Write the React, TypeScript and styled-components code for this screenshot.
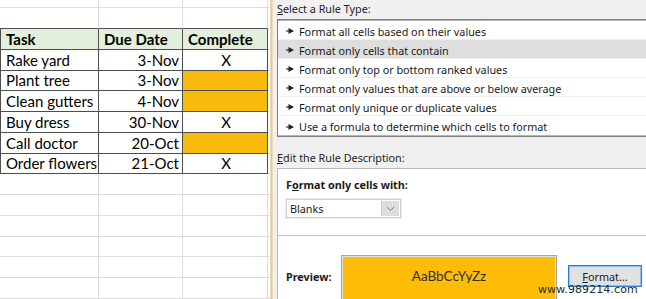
import React from 'react';
import styled, { createGlobalStyle, css } from 'styled-components';

const GlobalStyle = createGlobalStyle`
  html, body {
    margin: 0;
    padding: 0;
    width: 646px;
    height: 299px;
    overflow: hidden;
    background: #ffffff;
  }
`;

const Screen = styled.div`
  position: relative;
  display: flex;
  width: 646px;
  height: 299px;
  overflow: hidden;
`;

/* ---------- spreadsheet ---------- */

const Sheet = styled.div`
  width: 270px;
  flex: none;
  display: grid;
  grid-template-columns: 99px 84px 85px 2px;
  grid-template-rows: 8px 21px;
  grid-auto-rows: 20.75px;
  font-family: Lato, 'Open Sans', sans-serif;
  font-size: 15px;
  color: #000;
  background: #fff;
`;

type CellProps = {
  $dark?: boolean;
  $darkTop?: boolean;
  $darkLeft?: boolean;
  $head?: boolean;
  $fill?: boolean;
  $align?: 'left' | 'right' | 'center';
};

const Cell = styled.div<CellProps>`
  box-sizing: border-box;
  display: flex;
  align-items: center;
  padding: 0 3px 0 5px;
  white-space: nowrap;
  overflow: hidden;
  border-right: 1px solid #dcdcdc;
  border-bottom: 1px solid #dcdcdc;
  justify-content: ${(p) =>
    p.$align === 'right' ? 'flex-end' : p.$align === 'center' ? 'center' : 'flex-start'};
  ${(p) =>
    p.$dark &&
    css`
      border-right-color: #4d4d4d;
      border-bottom-color: #4d4d4d;
    `}
  ${(p) => p.$darkTop && css`border-bottom-color: #4d4d4d;`}
  ${(p) => p.$darkLeft && css`border-left: 1px solid #4d4d4d;`}
  ${(p) =>
    p.$head &&
    css`
      background: #e2efda;
      font-weight: 700;
    `}
  ${(p) => p.$fill && css`background: #f8bb0c;`}
`;

const Shadow = styled.div`
  width: 3px;
  flex: none;
  background: linear-gradient(to right, #f3e3c4, #e8c98f 50%, #efe6d6);
`;

/* ---------- dialog ---------- */

const Dialog = styled.div`
  flex: 1;
  background: #f0f0f0;
  padding: 0 0 0 4px;
  font-family: 'Noto Sans', 'Open Sans', sans-serif;
  font-size: 10.8px;
  color: #1a1a1a;
  display: flex;
  flex-direction: column;
`;

const Label = styled.div<{ $top: number }>`
  height: 16px;
  line-height: 16px;
  margin-top: ${(p) => p.$top}px;
  margin-bottom: 2px;
  color: #222;
`;

const Key = styled.span`
  text-decoration: underline;
  text-underline-offset: 1px;
`;

const RuleList = styled.ul`
  list-style: none;
  margin: 0 -10px 0 0;
  padding: 1px 0;
  height: 120px;
  box-sizing: border-box;
  background: #fff;
  border: 1px solid #7f7f7f;
  box-shadow: inset 0 1px 0 #b5b5b5, inset 0 -1px 0 #b5b5b5;
`;

const Rule = styled.li<{ $selected?: boolean }>`
  display: flex;
  align-items: center;
  gap: 5px;
  height: 19px;
  box-sizing: border-box;
  padding: 2px 0 0 8px;
  border-bottom: 1px solid #efefef;
  background: ${(p) => (p.$selected ? '#dedede' : 'transparent')};
  &:last-child {
    border-bottom: none;
  }
`;

const Panel = styled.div`
  flex: 1;
  margin-right: -10px;
  background: #fff;
  border: 1px solid #b9b9b9;
  display: flex;
  flex-direction: column;
`;

const Section = styled.div`
  height: 67px;
  box-sizing: border-box;
  padding: 8px 0 0 8px;
  border-bottom: 1px solid #c6c6c6;
`;

const Bold = styled.div`
  font-weight: 700;
  color: #1a1a1a;
  height: 16px;
  line-height: 16px;
`;

const Select = styled.div`
  margin-top: 6px;
  width: 115px;
  height: 19px;
  box-sizing: border-box;
  border: 1px solid #cfcfcf;
  background: #fff;
  display: flex;
  align-items: stretch;
  justify-content: space-between;
  padding-left: 3px;
  box-shadow: 0 0 0 1px #ececec;
`;

const SelectText = styled.span`
  line-height: 17px;
`;

const SelectButton = styled.span`
  width: 17px;
  margin: 1px;
  background: #dddddd;
  border-left: 1px solid #cfcfcf;
  display: flex;
  align-items: center;
  justify-content: center;
`;

const PreviewRow = styled.div`
  display: flex;
  align-items: flex-start;
  padding: 19px 0 0 8px;
`;

const PreviewLabel = styled(Bold)`
  width: 55px;
  margin-top: 14px;
`;

const PreviewBox = styled.div`
  width: 216px;
  height: 60px;
  box-sizing: border-box;
  background: #fdbd07;
  border: 1px solid #a6a6a6;
  box-shadow: inset 0 0 0 1px #e2e2e2;
  display: flex;
  justify-content: center;
  padding-top: 12px;
  font-family: Lato, 'Open Sans', sans-serif;
  font-size: 13.5px;
  color: #2e2e2e;
`;

const FormatButton = styled.button`
  margin: 10px 0 0 11px;
  width: 74px;
  height: 22px;
  box-sizing: border-box;
  background: #e1e1e1;
  border: 1px solid #2f7ec9;
  box-shadow: inset 0 0 0 1px #8cbcea;
  font-family: 'Noto Sans', 'Open Sans', sans-serif;
  font-size: 10.8px;
  color: #1a1a1a;
  padding: 0;
`;

const Watermark = styled.div`
  position: absolute;
  left: 538px;
  top: 283px;
  font-family: 'DejaVu Sans', sans-serif;
  font-size: 11px;
  color: #2a2a2a;
  letter-spacing: 0.1px;
`;

const Arrow = () => (
  <svg width="8" height="6" viewBox="0 0 8 6">
    <path d="M0 3h4" stroke="#222" strokeWidth="1.1" />
    <path d="M2.5 0 L8 3 L2.5 6 Z" fill="#222" />
  </svg>
);

const Chevron = () => (
  <svg width="9" height="6" viewBox="0 0 9 6">
    <path d="M1 1 L4.5 4.5 L8 1" fill="none" stroke="#7a7a7a" strokeWidth="1" />
  </svg>
);

const tasks: [string, string, boolean][] = [
  ['Rake yard', '3-Nov', true],
  ['Plant tree', '3-Nov', false],
  ['Clean gutters', '4-Nov', false],
  ['Buy dress', '30-Nov', true],
  ['Call doctor', '20-Oct', false],
  ['Order flowers', '21-Oct', true],
];

const rules = [
  'Format all cells based on their values',
  'Format only cells that contain',
  'Format only top or bottom ranked values',
  'Format only values that are above or below average',
  'Format only unique or duplicate values',
  'Use a formula to determine which cells to format',
];

const blankRow = (key: string, darkTop = false) => (
  <React.Fragment key={key}>
    <Cell $darkTop={darkTop} />
    <Cell $darkTop={darkTop} />
    <Cell $darkTop={darkTop} />
    <Cell />
  </React.Fragment>
);

export default function App() {
  return (
    <Screen>
      <GlobalStyle />
      <Sheet>
        {blankRow('r0')}
        {blankRow('r1', true)}
        <Cell $dark $darkLeft $head>Task</Cell>
        <Cell $dark $head>Due Date</Cell>
        <Cell $dark $head>Complete</Cell>
        <Cell />
        {tasks.map(([task, due, done]) => (
          <React.Fragment key={task}>
            <Cell $dark $darkLeft>{task}</Cell>
            <Cell $dark $align="right">{due}</Cell>
            <Cell $dark $align="center" $fill={!done}>{done ? 'X' : ''}</Cell>
            <Cell />
          </React.Fragment>
        ))}
        {[0, 1, 2, 3, 4, 5].map((i) => blankRow(`e${i}`))}
      </Sheet>
      <Shadow />
      <Dialog>
        <Label $top={1}>
          <Key>S</Key>elect a Rule Type:
        </Label>
        <RuleList>
          {rules.map((r, i) => (
            <Rule key={r} $selected={i === 1}>
              <Arrow />
              {r}
            </Rule>
          ))}
        </RuleList>
        <Label $top={13}>
          <Key>E</Key>dit the Rule Description:
        </Label>
        <Panel>
          <Section>
            <Bold>
              F<Key>o</Key>rmat only cells with:
            </Bold>
            <Select>
              <SelectText>Blanks</SelectText>
              <SelectButton>
                <Chevron />
              </SelectButton>
            </Select>
          </Section>
          <PreviewRow>
            <PreviewLabel>Preview:</PreviewLabel>
            <PreviewBox>AaBbCcYyZz</PreviewBox>
            <FormatButton>
              <Key>F</Key>ormat...
            </FormatButton>
          </PreviewRow>
        </Panel>
      </Dialog>
      <Watermark>www.989214.com</Watermark>
    </Screen>
  );
}
